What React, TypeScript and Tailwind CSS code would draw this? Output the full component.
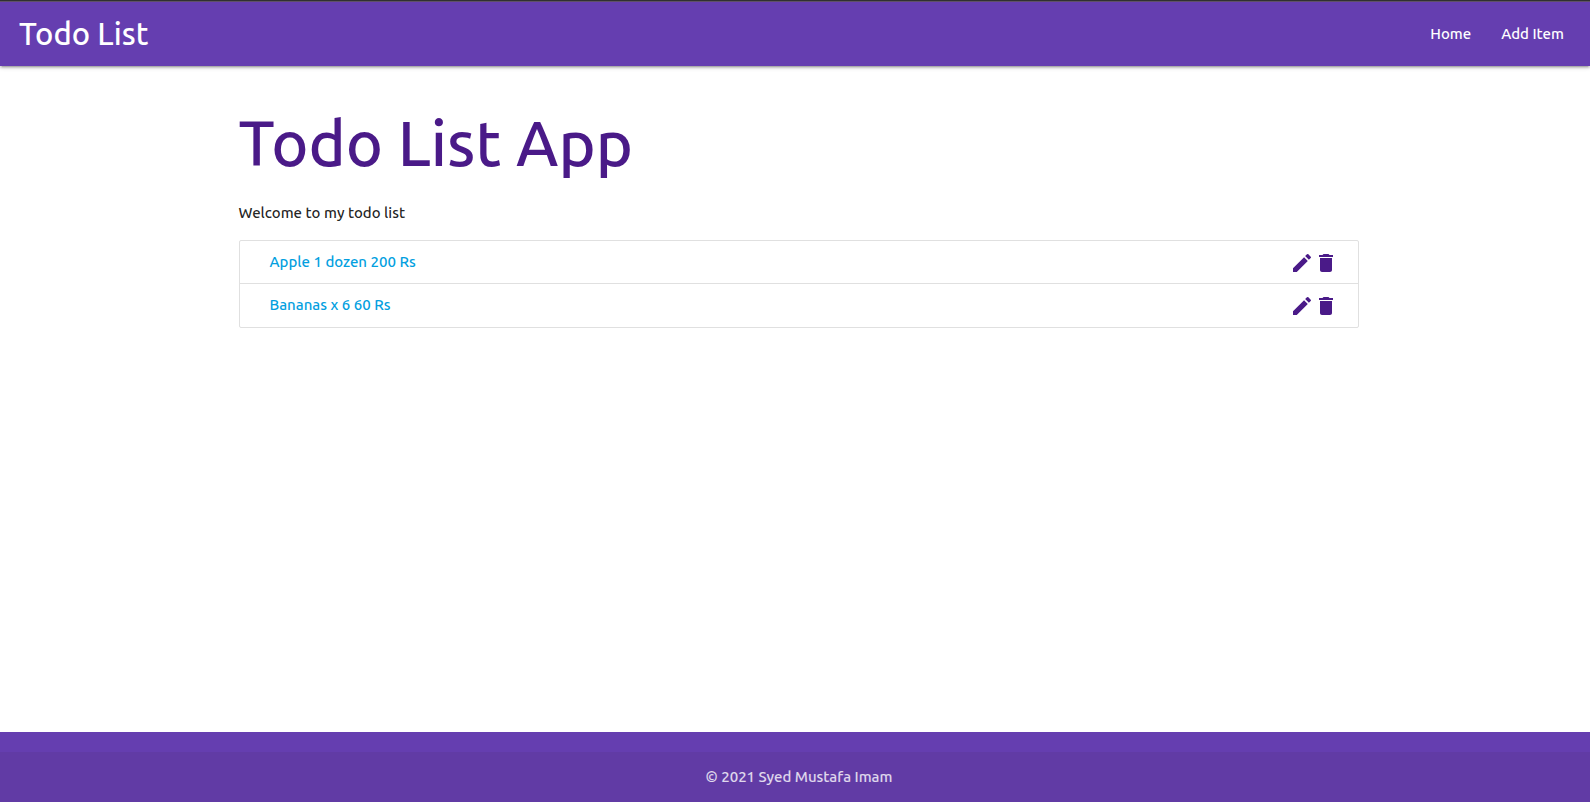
const items = ["Apple 1 dozen 200 Rs", "Bananas x 6 60 Rs"];

export default function App() {
  return (
    <div className="flex min-h-screen flex-col bg-white font-['Ubuntu','Noto_Sans',sans-serif] text-[15px] leading-[22px] font-medium text-black/87">
      <header className="relative border-t border-[#303030] bg-[#653eb0] text-white shadow-[0_2px_2px_0_rgba(0,0,0,0.14),0_3px_1px_-2px_rgba(0,0,0,0.12),0_1px_5px_0_rgba(0,0,0,0.2)]">
        <nav className="box-content flex h-16 items-center justify-between border-t border-[#5f5068] pr-[11px] pl-[19px]">
          <a href="#" className="text-[31px] leading-[64px]">Todo List</a>
          <ul className="flex leading-[64px]">
            <li><a href="#" className="block px-[15px]">Home</a></li>
            <li><a href="#" className="block px-[15px]">Add Item</a></li>
          </ul>
        </nav>
      </header>
      <main className="flex-1 pt-[42px] pr-[14.5%] pl-[15%]">
        <h1 className="text-[63px] leading-[70px] text-[#4a1a88]">Todo List App</h1>
        <p className="mt-6">Welcome to my todo list</p>
        <ul className="mt-4 rounded-[2px] border border-[#e0e0e0]">
          {items.map((item) => (
            <li key={item} className="flex h-[43px] items-start justify-between border-b border-[#e0e0e0] pt-2.5 pr-5 pl-[30px] last:border-b-0">
              <a href="#" className="text-[#039fdf]">{item}</a>
              <span className="flex text-[#4a1a88]">
                <button type="button" aria-label="Edit">
                  <svg viewBox="0 0 24 24" className="size-6 fill-current"><path d="M3 17.25V21h3.75L17.81 9.94l-3.75-3.75L3 17.25zM20.71 7.04a.996.996 0 0 0 0-1.41l-2.34-2.34a.996.996 0 0 0-1.41 0l-1.83 1.83 3.75 3.75 1.83-1.83z" /></svg>
                </button>
                <button type="button" aria-label="Delete">
                  <svg viewBox="0 0 24 24" className="size-6 fill-current"><path d="M6 19c0 1.1.9 2 2 2h8c1.1 0 2-.9 2-2V7H6v12zM19 4h-3.5l-1-1h-5l-1 1H5v2h14V4z" /></svg>
                </button>
              </span>
            </li>
          ))}
        </ul>
      </main>
      <footer className="bg-[#653eb0] pt-5 text-white/80">
        <div className="flex h-[50px] items-center justify-center bg-[#613ba5] pl-2">© 2021 Syed Mustafa Imam</div>
      </footer>
    </div>
  );
}
